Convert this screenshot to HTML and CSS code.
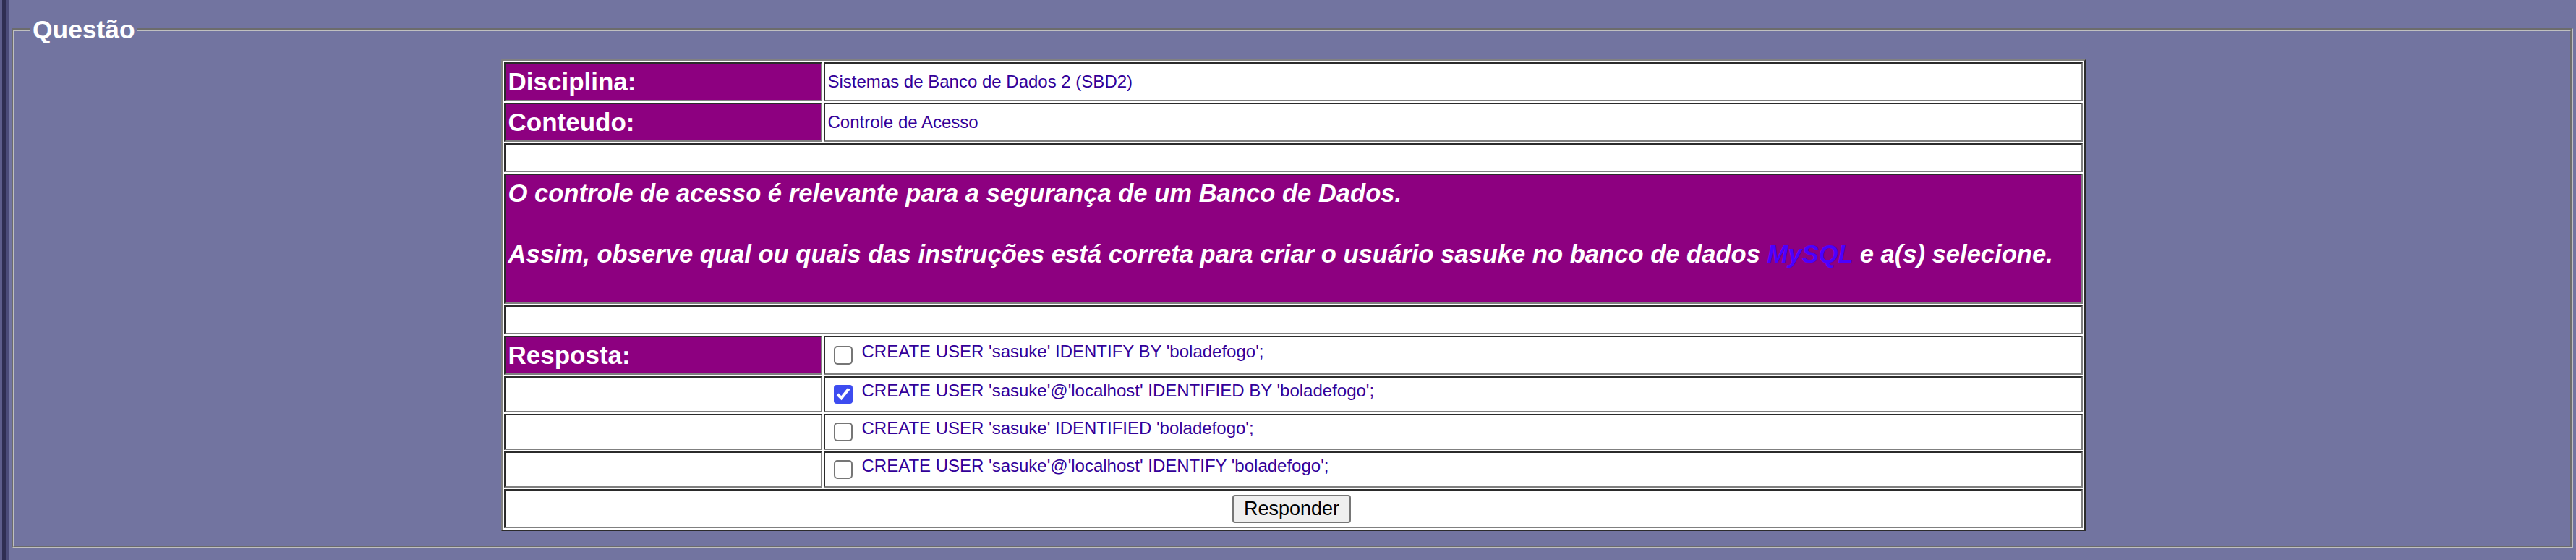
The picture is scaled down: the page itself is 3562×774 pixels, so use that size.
FILE: index.html
```html
<!DOCTYPE html>
<html lang="pt-BR">
<head>
<meta charset="utf-8">
<title>Questão</title>
<link rel="stylesheet" href="styles.css">
</head>
<body>
<div class="frame-edge"></div>
<main class="page">
  <fieldset class="box">
    <legend class="box-title">Questão</legend>
    <form class="qtable">
      <div class="cell label">Disciplina:</div>
      <div class="cell data">Sistemas de Banco de Dados 2 (SBD2)</div>
      <div class="cell label">Conteudo:</div>
      <div class="cell data">Controle de Acesso</div>
      <div class="cell full blank"></div>
      <div class="cell full question">
        <p class="q-text">O controle de acesso é relevante para a segurança de um Banco de Dados.<br><br>Assim, observe qual ou quais das instruções está correta para criar o usuário sasuke no banco de dados <span class="hl">MySQL</span> e a(s) selecione.</p>
      </div>
      <div class="cell full blank"></div>
      <div class="cell label">Resposta:</div>
      <div class="cell data"><label class="opt"><input type="checkbox" class="chk" name="r1"><span>CREATE USER 'sasuke' IDENTIFY BY 'boladefogo';</span></label></div>
      <div class="cell empty"></div>
      <div class="cell data"><label class="opt"><input type="checkbox" class="chk" name="r2" checked><span>CREATE USER 'sasuke'@'localhost' IDENTIFIED BY 'boladefogo';</span></label></div>
      <div class="cell empty"></div>
      <div class="cell data"><label class="opt"><input type="checkbox" class="chk" name="r3"><span>CREATE USER 'sasuke' IDENTIFIED 'boladefogo';</span></label></div>
      <div class="cell empty"></div>
      <div class="cell data"><label class="opt"><input type="checkbox" class="chk" name="r4"><span>CREATE USER 'sasuke'@'localhost' IDENTIFY 'boladefogo';</span></label></div>
      <div class="cell full actions"><button type="button" class="btn">Responder</button></div>
    </form>
  </fieldset>
</main>
</body>
</html>
```
FILE: styles.css
```css
html, body {
  margin: 0;
  padding: 0;
}
body {
  background: #7274a0;
  font-family: "Liberation Sans", Arial, sans-serif;
  display: flex;
  min-height: 774px;
}
.frame-edge {
  width: 12px;
  flex: none;
  background: linear-gradient(to right, #5d5d8b 0 3px, #2f2e52 3px 8px, #4b4b79 8px 12px);
}
.page {
  flex: 1;
  min-width: 0;
}
.box {
  margin: 21px 4px 0 4px;
  padding: 21px 20px 20px 22px;
  border: 4px groove #c0c0c0;
  min-width: 0;
}
.box-title {
  padding: 0 3px;
  font-size: 35.4px;
  line-height: 40px;
  font-weight: bold;
  color: #fff;
}
.qtable {
  box-sizing: border-box;
  width: 2191px;
  margin: 0 auto;
  background: #fff;
  border: 2px solid;
  border-color: #808080 #2b2b2b #2b2b2b #808080;
  padding: 2px;
  display: grid;
  grid-template-columns: 440px 1fr;
  grid-template-rows: 54px 54px 40px 180px 40px 54px 50px 50px 50px 54px;
  gap: 2px;
}
.cell {
  box-sizing: border-box;
  border: 2px solid;
  border-color: #2b2b2b #808080 #808080 #2b2b2b;
  padding: 4px;
  display: flex;
  align-items: center;
  min-width: 0;
}
.full {
  grid-column: 1 / -1;
}
.label {
  background: #8d0080;
  color: #fff;
  font-size: 35px;
  font-weight: bold;
  line-height: 40px;
}
.data {
  color: #330099;
  font-size: 24px;
  line-height: 28px;
}
.question {
  background: #8d0080;
  align-items: flex-start;
}
.q-text {
  margin: 0;
  color: #fff;
  font-size: 34.6px;
  font-weight: bold;
  font-style: italic;
  line-height: 42px;
}
.hl {
  color: #4b00ff;
}
.opt {
  display: flex;
  align-items: flex-start;
}
.chk {
  zoom: 2;
  width: 13px;
  height: 13px;
  margin: 3px 6.5px 3px 4px;
  accent-color: #3d4cf0;
}
.opt span {
  line-height: 28px;
}
.actions {
  justify-content: center;
}
.btn {
  font-family: "Liberation Sans", Arial, sans-serif;
  font-size: 27px;
  line-height: 31px;
  color: #000;
  background: #efefef;
  border: 2px solid #767676;
  border-radius: 4px;
  padding: 2px 14px;
  margin-left: -4px;
}
```
